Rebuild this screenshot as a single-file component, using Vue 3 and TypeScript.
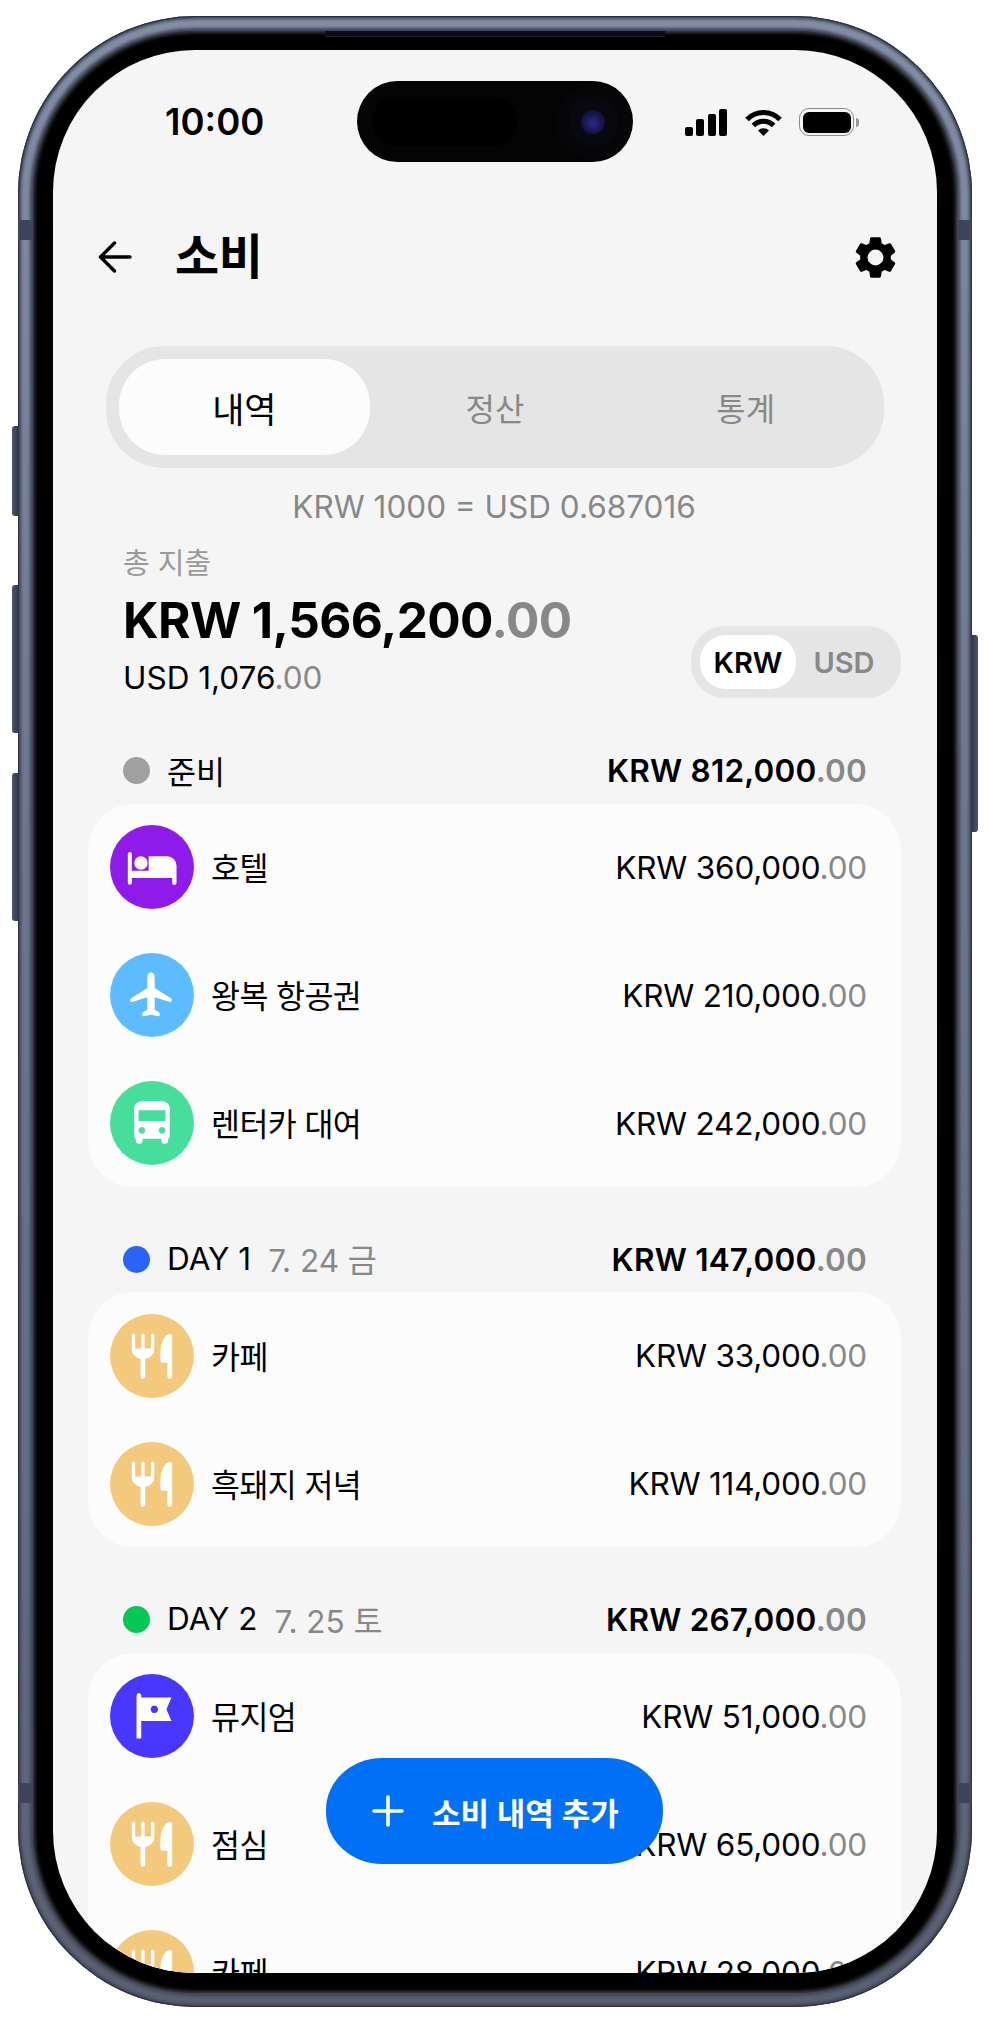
<script setup lang="ts">
type IconKind = "bed" | "plane" | "bus" | "food" | "flag";

interface Row {
  icon: IconKind;
  label: string;
  amount: string;
}

interface Section {
  dot: string;
  title: string;
  date?: string;
  total: string;
  rows: Row[];
}

const iconColors: Record<IconKind, string> = {
  bed: "#8e1bea",
  plane: "#5cbcff",
  bus: "#47dd9d",
  food: "#f3ca7d",
  flag: "#4a37ff",
};

const sections: Section[] = [
  {
    dot: "#a0a0a0",
    title: "준비",
    total: "KRW 812,000",
    rows: [
      { icon: "bed", label: "호텔", amount: "KRW 360,000" },
      { icon: "plane", label: "왕복 항공권", amount: "KRW 210,000" },
      { icon: "bus", label: "렌터카 대여", amount: "KRW 242,000" },
    ],
  },
  {
    dot: "#2a64f6",
    title: "DAY 1",
    date: "7. 24 금",
    total: "KRW 147,000",
    rows: [
      { icon: "food", label: "카페", amount: "KRW 33,000" },
      { icon: "food", label: "흑돼지 저녁", amount: "KRW 114,000" },
    ],
  },
  {
    dot: "#04c755",
    title: "DAY 2",
    date: "7. 25 토",
    total: "KRW 267,000",
    rows: [
      { icon: "flag", label: "뮤지엄", amount: "KRW 51,000" },
      { icon: "food", label: "점심", amount: "KRW 65,000" },
      { icon: "food", label: "카페", amount: "KRW 28,000" },
    ],
  },
];

const tabs = ["내역", "정산", "통계"];
const signalBars = [27, 50, 65, 80].map((h) => h / 3);
</script>

<template>
  <div class="phone">
    <span class="side-btn left b1"></span>
    <span class="side-btn left b2"></span>
    <span class="side-btn left b3"></span>
    <span class="side-btn right b4"></span>
    <span class="band l1"></span>
    <span class="band r1"></span>
    <span class="band l2"></span>
    <span class="band r2"></span>
    <span class="top-notch"></span>

    <div class="bezel">
      <div class="screen">
        <div class="island">
          <span class="sensor"></span>
          <span class="camera"><i></i></span>
        </div>

        <div class="status">
          <span class="time">10:00</span>
          <div class="status-icons">
            <div class="signal">
              <i v-for="h in signalBars" :key="h" :style="{ height: h + 'px' }"></i>
            </div>
            <svg class="wifi" width="37" height="27" viewBox="0 0 37 27">
              <path d="M2 10.5A23 23 0 0 1 35 10.5" fill="none" stroke="#000" stroke-width="5" />
              <path d="M8.4 16.6A14 14 0 0 1 28.6 16.6" fill="none" stroke="#000" stroke-width="5" />
              <path d="M13 21.5a8 8 0 0 1 11 0L18.5 27z" fill="#000" />
            </svg>
            <div class="battery"><i></i></div>
            <span class="nub"></span>
          </div>
        </div>

        <header class="topbar">
          <svg width="34" height="32" viewBox="0 0 34 32" class="back">
            <path d="M32 16H3M16.5 2 2.5 16l14 14" fill="none" stroke="#000" stroke-width="3.4" stroke-linecap="round" stroke-linejoin="round" />
          </svg>
          <h1>소비</h1>
          <svg class="gear" width="49" height="49" viewBox="0 0 24 24">
            <path d="M19.14 12.94c.04-.3.06-.61.06-.94 0-.32-.02-.64-.07-.94l2.03-1.58a.49.49 0 0 0 .12-.61l-1.92-3.32a.488.488 0 0 0-.59-.22l-2.39.96c-.5-.38-1.03-.7-1.62-.94l-.36-2.54a.484.484 0 0 0-.48-.41h-3.84c-.24 0-.43.17-.47.41l-.36 2.54c-.59.24-1.13.57-1.62.94l-2.39-.96c-.22-.08-.47 0-.59.22L2.74 8.87c-.12.21-.08.47.12.61l2.03 1.58c-.05.3-.09.63-.09.94s.02.64.07.94l-2.03 1.58a.49.49 0 0 0-.12.61l1.92 3.32c.12.22.37.29.59.22l2.39-.96c.5.38 1.03.7 1.62.94l.36 2.54c.05.24.24.41.48.41h3.84c.24 0 .44-.17.47-.41l.36-2.54c.59-.24 1.13-.56 1.62-.94l2.39.96c.22.08.47 0 .59-.22l1.92-3.32c.12-.22.07-.47-.12-.61l-2.01-1.58zM12 16.200c-2.3 0-4.200-1.900-4.200-4.200s1.900-4.200 4.200-4.200 4.200 1.900 4.200 4.200-1.900 4.200-4.200 4.200z" fill="#000" stroke="#000" stroke-width="0.6" stroke-linejoin="round" />
          </svg>
        </header>

        <div class="tabs">
          <div v-for="(t, i) in tabs" :key="t" class="tab" :class="{ active: i === 0 }">{{ t }}</div>
        </div>

        <p class="rate">KRW 1000 = USD 0.687016</p>

        <div class="summary">
          <div>
            <p class="sum-label">총 지출</p>
            <p class="sum-main">KRW 1,566,200<span class="cents">.00</span></p>
            <p class="sum-sub">USD 1,076<span class="cents">.00</span></p>
          </div>
          <div class="toggle">
            <span class="opt on">KRW</span>
            <span class="opt">USD</span>
          </div>
        </div>

        <section v-for="s in sections" :key="s.title" class="section">
          <div class="sec-head">
            <span class="dot" :style="{ background: s.dot }"></span>
            <span class="sec-title">{{ s.title }}</span>
            <span v-if="s.date" class="sec-date">{{ s.date }}</span>
            <span class="sec-total">{{ s.total }}<span class="cents">.00</span></span>
          </div>
          <div class="card">
            <div v-for="r in s.rows" :key="r.label + r.amount" class="row">
              <span class="icon" :style="{ background: iconColors[r.icon] }">
                <svg width="84" height="84" viewBox="0 0 250 250" fill="#fff">
                  <template v-if="r.icon === 'bed'">
                    <path d="M115 93H170a28 28 0 0 1 28 28V172a6.500 6.500 0 0 1-13 0V158H65V172a6 6 0 0 1-12 0V86a6 6 0 0 1 12 0V136H115Z" />
                    <circle cx="92" cy="113" r="20" />
                  </template>
                  <path v-else-if="r.icon === 'plane'" d="M122 58C115 58 111 64 111 72V104L63 135C58 138 59 147 66 146L111 132V168L98 176C95 178 95 190 100 188L122 184L144 188C149 190 149 178 146 176L133 168V132L178 146C185 147 186 138 181 135L133 104V72C133 64 129 58 122 58Z" />
                  <path v-else-if="r.icon === 'bus'" fill-rule="evenodd" d="M94 60H156a22 22 0 0 1 22 22V165a8 8 0 0 1-5 7.500V177a8 8 0 0 1-20 0V172H97V177a8 8 0 0 1-20 0V172.500a8 8 0 0 1-5-7.500V82a22 22 0 0 1 22-22ZM85 87V119H165V87ZM95 137a10 10 0 1 0 .01 0ZM155 137a10 10 0 1 0 .01 0Z" />
                  <template v-else-if="r.icon === 'food'">
                    <path d="M65 63a5 5 0 0 1 10 0V103H93V63a5 5 0 0 1 10 0V103H122V63a5 5 0 0 1 10 0V105a33 30 0 0 1-27 29V186a7 7 0 0 1-14 0V134a33 30 0 0 1-26-29Z" />
                    <path d="M185 66V186a7 7 0 0 1-14 0V145H158a8 8 0 0 1-8-8V115C150 90 160 62 178 59a6 6 0 0 1 7 7Z" />
                  </template>
                  <template v-else>
                    <path fill-rule="evenodd" d="M79 64a7 7 0 0 1 14 0V70H183L168 105L183 140H93V192H79ZM132 94a11 11 0 1 0 .01 0Z" />
                  </template>
                </svg>
              </span>
              <span class="row-label">{{ r.label }}</span>
              <span class="row-amount">{{ r.amount }}<span class="cents">.00</span></span>
            </div>
          </div>
        </section>

        <button class="fab" type="button">
          <svg width="32" height="32" viewBox="0 0 32 32">
            <path d="M16 2V30M2 16H30" stroke="#fff" stroke-width="3.600" stroke-linecap="round" />
          </svg>
          <span>소비 내역 추가</span>
        </button>
      </div>
    </div>
  </div>
</template>

<style>
html,
body {
  margin: 0;
  background: #fff;
}
</style>

<style scoped>
p,
h1 {
  margin: 0;
}

.phone {
  position: relative;
  box-sizing: border-box;
  width: 954px;
  height: 1991px;
  margin: 16px 0 0 18px;
  padding: 15px 15px 14px 15px;
  border-radius: 178px;
  background: linear-gradient(180deg, #838da3 0%, #6e778d 40%, #646c80 75%, #5a6070 100%);
  box-shadow: inset 0 0 0 1px #2a2f42, inset 0 0 3px 3px #3f465b;
  font-family: Inter, "Noto Sans CJK KR", sans-serif;
  color: #000;
}

.side-btn {
  position: absolute;
  width: 7px;
  background: linear-gradient(90deg, #4d556b, #2f3549);
}

.side-btn.left {
  left: -6px;
  border-radius: 3px 0 0 3px;
}

.side-btn.right {
  right: -6px;
  border-radius: 0 3px 3px 0;
  background: linear-gradient(90deg, #2f3549, #4d556b);
}

.b1 {
  top: 410px;
  height: 90px;
}

.b2 {
  top: 569px;
  height: 148px;
}

.b3 {
  top: 757px;
  height: 148px;
}

.b4 {
  top: 619px;
  height: 197px;
}

.band {
  position: absolute;
  width: 15px;
  height: 20px;
  background: #3d4459;
}

.l1 {
  left: 0;
  top: 204px;
}

.r1 {
  right: 0;
  top: 204px;
}

.l2 {
  left: 0;
  top: 1767px;
}

.r2 {
  right: 0;
  top: 1767px;
}

.top-notch {
  position: absolute;
  z-index: 1;
  left: 307px;
  top: 15px;
  width: 340px;
  height: 5px;
  background: #0b0d16;
  border-bottom: 1px solid #222;
}

.bezel {
  box-sizing: border-box;
  height: 100%;
  padding: 19px 20px 20px 20px;
  border-radius: 162px;
  background: #000;
  box-shadow: 0 0 3px 3px #3f465b, inset 0 0 4px 1px #555;
}

.screen {
  position: relative;
  height: 100%;
  overflow: hidden;
  border-radius: 142px;
  background: #f5f5f5;
}

.island {
  position: absolute;
  left: 304px;
  top: 31px;
  width: 276px;
  height: 81px;
  border-radius: 41px;
  background: #040405;
}

.sensor {
  position: absolute;
  left: 15px;
  top: 16px;
  width: 145px;
  height: 49px;
  border-radius: 25px;
  background: #000;
}

.camera {
  position: absolute;
  left: 198.500px;
  top: 3px;
  width: 75px;
  height: 75px;
  border-radius: 50%;
  background: radial-gradient(circle, #08080f 0 24px, #060608 25px);
}

.camera i {
  position: absolute;
  left: 25.500px;
  top: 25.500px;
  width: 24px;
  height: 24px;
  border-radius: 50%;
  background: radial-gradient(circle at 50% 55%, #2c2a8a 0, #1a1450 50%, #0a0a1e 100%);
}

.status {
  display: flex;
  align-items: center;
  height: 144px;
  padding: 0 78px 0 112px;
  justify-content: space-between;
}

.time {
  font-size: 36.500px;
  font-weight: 600;
}

.status-icons {
  display: flex;
  align-items: center;
  height: 28px;
}

.signal {
  display: flex;
  align-items: flex-end;
  gap: 3.500px;
  height: 27px;
  margin-right: 18px;
}

.signal i {
  width: 8px;
  border-radius: 2px;
  background: #000;
}

.wifi {
  margin-right: 17px;
}

.battery {
  box-sizing: border-box;
  width: 55px;
  height: 28px;
  padding: 2.500px;
  border: 1.500px solid #8a8a8a;
  border-radius: 10px;
}

.battery i {
  display: block;
  height: 100%;
  border-radius: 6px;
  background: #000;
}

.nub {
  width: 3px;
  height: 9px;
  margin-left: 2px;
  border-radius: 0 3px 3px 0;
  background: #999;
}

.topbar {
  display: flex;
  align-items: center;
  height: 80px;
  margin-top: 23px;
  padding: 0 37px 0 45px;
}

.topbar h1 {
  margin-left: 43px;
  font-size: 48px;
  font-weight: 700;
  line-height: 1;
  letter-spacing: -0.500px;
}

.gear {
  margin-left: auto;
}

.tabs {
  display: flex;
  height: 122px;
  box-sizing: border-box;
  margin: 49px 53px 0;
  padding: 13px;
  border-radius: 58px;
  background: #e5e5e5;
}

.tab {
  display: flex;
  flex: 1;
  align-items: center;
  justify-content: center;
  border-radius: 46px;
  color: #888;
  font-size: 32px;
}

.tab.active {
  background: #fcfcfc;
  color: #000;
  font-size: 35px;
}

.rate {
  margin-top: 19px;
  padding-right: 2px;
  color: #888;
  font-size: 31.500px;
  line-height: 40px;
  text-align: center;
}

.summary {
  display: flex;
  align-items: flex-end;
  justify-content: space-between;
  margin-top: 17px;
  padding: 0 36px 0 70px;
}

.sum-label {
  color: #999;
  font-size: 29px;
  line-height: 40px;
}

.sum-main {
  margin-top: 6px;
  font-size: 49.500px;
  font-weight: 700;
  line-height: 60px;
  letter-spacing: -0.600px;
}

.sum-sub {
  margin-top: 8px;
  font-size: 31.500px;
  line-height: 40px;
}

.cents {
  color: #888;
}

.toggle {
  display: flex;
  box-sizing: border-box;
  width: 210px;
  height: 72px;
  padding: 9px;
  border-radius: 34px;
  background: #e5e5e5;
}

.opt {
  display: flex;
  align-items: center;
  justify-content: center;
  width: 96px;
  border-radius: 26px;
  color: #888;
  font-size: 29px;
  font-weight: 600;
}

.opt.on {
  background: #fff;
  color: #000;
}

.section {
  margin-top: 52.500px;
}

.sec-head {
  display: flex;
  align-items: center;
  height: 40px;
  padding: 0 70px 0 70px;
  font-size: 31.500px;
}

.dot {
  width: 27px;
  height: 27px;
  margin-right: 17px;
  border-radius: 50%;
}

.sec-title,
.sec-date {
  margin-top: -2px;
}

.sec-date {
  margin-left: 17px;
  color: #888;
}

.sec-total {
  margin-left: auto;
  font-weight: 600;
  letter-spacing: 0.200px;
}

.card {
  display: flex;
  flex-direction: column;
  gap: 44px;
  margin: 13px 36px 0 35px;
  padding: 21.500px 34px 21.500px 22px;
  border-radius: 46px;
  background: #fcfcfc;
}

.row {
  display: flex;
  align-items: center;
  height: 84px;
  font-size: 31.500px;
}

.icon {
  display: block;
  flex: none;
  width: 84px;
  height: 84px;
  margin-right: 17px;
  border-radius: 50%;
}

.icon svg {
  display: block;
}

.row-label {
  margin-top: -2px;
  letter-spacing: -0.600px;
}

.row-amount {
  margin-left: auto;
  letter-spacing: -0.200px;
}

.fab {
  position: absolute;
  left: 273px;
  top: 1708px;
  display: flex;
  align-items: center;
  box-sizing: border-box;
  width: 337px;
  height: 106px;
  padding: 0 0 0 46px;
  border: 0;
  border-radius: 56px / 52px;
  background: #0070f5;
  color: #fff;
  font-family: inherit;
  font-size: 31px;
  font-weight: 600;
}

.fab span {
  margin-left: 28px;
}
</style>
